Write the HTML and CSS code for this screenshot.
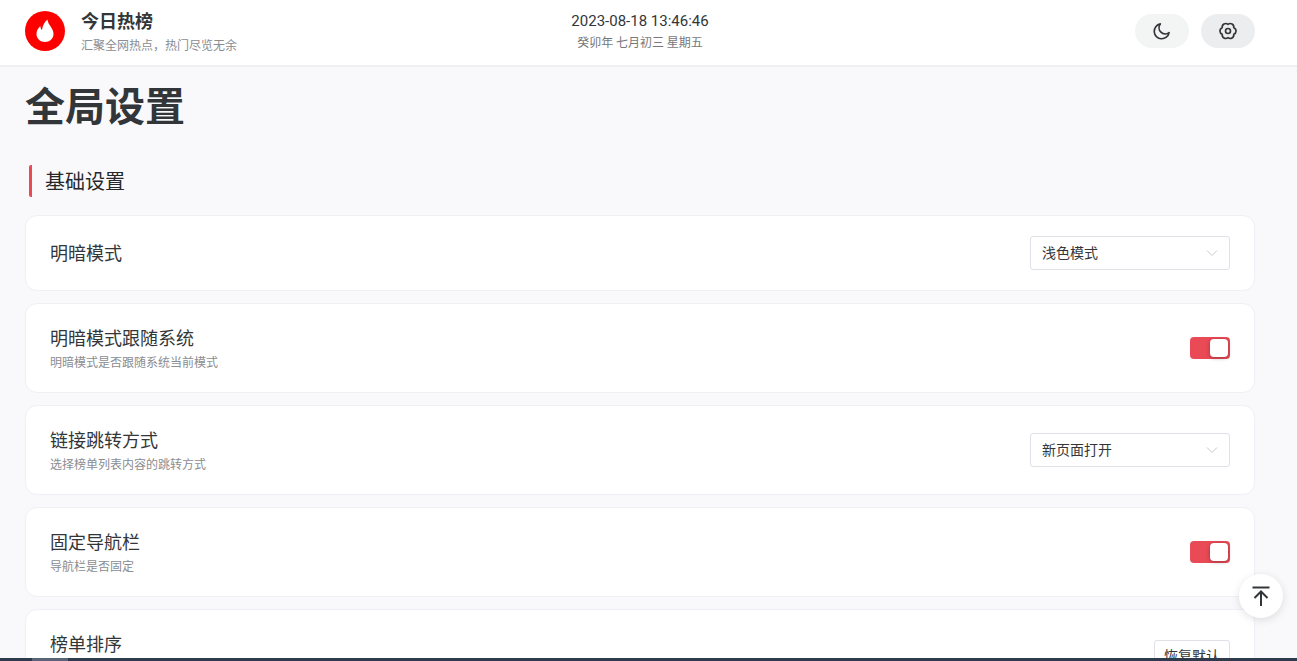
FILE: index.html
```html
<!DOCTYPE html>
<html lang="zh-CN">
<head>
    <meta charset="UTF-8">
    <title>全局设置 - 今日热榜</title>
    <link rel="stylesheet" href="styles.css">
</head>
<body>

<header class="nav">
    <div class="brand">
        <div class="logo">
            <svg width="24" height="24" viewBox="0 0 24 24"><path fill="#fff" d="M14.500 .5c.2 3 1.800 5 3.300 7.300C19.300 10 20.500 12.500 20.500 15c0 4.500-3.800 8-8.500 8s-8.500-3.500-8.500-8c0-3 1.300-5.500 3.800-8 .2 2 .6 3 1.700 4C9.500 7 11 3.500 14.500 .5z"/></svg>
        </div>
        <div class="brand-text">
            <div class="brand-name">今日热榜</div>
            <div class="brand-desc">汇聚全网热点，热门尽览无余</div>
        </div>
    </div>
    <div class="clock">
        <div class="clock-time">2023-08-18 13:46:46</div>
        <div class="clock-date">癸卯年 七月初三 星期五</div>
    </div>
    <div class="nav-btns">
        <div class="nav-btn">
            <svg width="20" height="20" viewBox="0 0 24 24" fill="none" stroke="#333639" stroke-width="2" stroke-linecap="round" stroke-linejoin="round"><path d="M10 3.500a9 9 0 1 0 10.500 10.500 7.500 7.500 0 0 1-10.500-10.500z"/></svg>
        </div>
        <div class="nav-btn active">
            <svg width="20" height="20" viewBox="0 0 24 24" fill="none" stroke="#333639" stroke-width="2" stroke-linejoin="round"><path d="M18.930 8A4.300 4.300 0 0 1 18.930 16A4.300 4.300 0 0 1 12 20A4.300 4.300 0 0 1 5.070 16A4.300 4.300 0 0 1 5.070 8A4.300 4.300 0 0 1 12 4A4.300 4.300 0 0 1 18.930 8z"/><circle cx="12" cy="12" r="3"/></svg>
        </div>
    </div>
</header>

<main class="content">
    <h1 class="page-title">全局设置</h1>
    <div class="section-title">基础设置</div>

    <div class="card card-single">
        <div class="card-name">明暗模式</div>
        <div class="select"><span>浅色模式</span><svg class="arrow" width="12" height="12" viewBox="0 0 12 12" fill="none" stroke="#c8c9cc" stroke-width="1"><path d="M1 3.500l5 5 5-5"/></svg></div>
    </div>

    <div class="card">
        <div>
            <div class="card-name">明暗模式跟随系统</div>
            <div class="card-tip">明暗模式是否跟随系统当前模式</div>
        </div>
        <div class="switch"><div class="knob"></div></div>
    </div>

    <div class="card">
        <div>
            <div class="card-name">链接跳转方式</div>
            <div class="card-tip">选择榜单列表内容的跳转方式</div>
        </div>
        <div class="select"><span>新页面打开</span><svg class="arrow" width="12" height="12" viewBox="0 0 12 12" fill="none" stroke="#c8c9cc" stroke-width="1"><path d="M1 3.500l5 5 5-5"/></svg></div>
    </div>

    <div class="card">
        <div>
            <div class="card-name">固定导航栏</div>
            <div class="card-tip">导航栏是否固定</div>
        </div>
        <div class="switch"><div class="knob"></div></div>
    </div>

    <div class="card">
        <div class="card-name card-name-only">榜单排序</div>
        <div class="reset-btn">恢复默认</div>
    </div>
</main>

<div class="scrollbar"><div class="scrollbar-thumb"></div></div>

<div class="to-top">
    <svg width="24" height="24" viewBox="0 0 24 24" fill="none" stroke="#333639" stroke-width="2"><path d="M3.500 3.500h17"/><path d="M12 22V8"/><path d="M5.500 14L12 7.500l6.500 6.500"/></svg>
</div>

</body>
</html>
```

FILE: styles.css
```css
html, body {
    margin: 0;
    height: 100%;
    overflow: hidden;
}
body {
    display: flex;
    flex-direction: column;
    background-color: #f9f9fc;
    color: #333639;
    font-family: "Noto Sans CJK SC", "Open Sans", sans-serif;
}

/* top bar */
.nav {
    box-sizing: border-box;
    flex: none;
    height: 67px;
    display: flex;
    align-items: center;
    justify-content: space-between;
    padding: 0 42px 4px 25px;
    background-color: #fff;
    border-bottom: 2px solid #efeff5;
}
.brand {
    width: 400px;
    display: flex;
    align-items: center;
}
.logo {
    width: 40px;
    height: 40px;
    border-radius: 50%;
    background-color: #f00;
    display: flex;
    align-items: center;
    justify-content: center;
}
.brand-text {
    margin-left: 16px;
}
.brand-name {
    font-size: 18px;
    font-weight: 700;
    line-height: 24px;
}
.brand-desc {
    margin-top: 4px;
    font-size: 12px;
    line-height: 17px;
    color: #8a8d91;
}
.clock {
    text-align: center;
}
.clock-time {
    font-family: Roboto, sans-serif;
    font-size: 15px;
    line-height: 20px;
}
.clock-date {
    margin-top: 2px;
    font-size: 12px;
    line-height: 17px;
    color: #76787b;
}
.nav-btns {
    width: 400px;
    display: flex;
    justify-content: flex-end;
    gap: 12px;
}
.nav-btn {
    width: 54px;
    height: 34px;
    border-radius: 17px;
    background-color: #f3f4f4;
    display: flex;
    align-items: center;
    justify-content: center;
}
.nav-btn.active {
    background-color: #ecedee;
}

/* settings */
.content {
    flex: 1;
    min-height: 0;
    overflow: hidden;
    padding: 0 42px 0 25px;
}
.page-title {
    margin: 9px 0 0;
    font-size: 40px;
    font-weight: 700;
    line-height: 56px;
}
.section-title {
    margin: 33px 0 18px 4px;
    height: 32px;
    padding-left: 13px;
    border-left: 3px solid #e94a55;
    border-radius: 2px;
    font-size: 20px;
    line-height: 32px;
    color: #26282b;
}
.card {
    box-sizing: border-box;
    height: 90px;
    margin-bottom: 12px;
    padding: 0 24px;
    display: flex;
    align-items: center;
    justify-content: space-between;
    background-color: #fff;
    border: 1px solid #efeff5;
    border-radius: 12px;
}
.card-single {
    height: 76px;
}
.card-name {
    margin-top: -2px;
    font-size: 18px;
    line-height: 25px;
}
.card-name-only {
    margin: 0 0 22px;
}
.card-tip {
    margin-top: 3px;
    font-size: 12px;
    line-height: 17px;
    color: #8a8d91;
}
.select {
    box-sizing: border-box;
    width: 200px;
    height: 34px;
    padding: 0 11px 2px;
    display: flex;
    align-items: center;
    justify-content: space-between;
    border: 1px solid #e0e0e6;
    border-radius: 3px;
    font-size: 14px;
}
.arrow {
    margin-top: 2px;
}
.switch {
    box-sizing: border-box;
    width: 40px;
    height: 22px;
    padding: 2px;
    display: flex;
    justify-content: flex-end;
    background-color: #e94a55;
    border-radius: 4px;
}
.knob {
    width: 18px;
    height: 18px;
    background-color: #fff;
    border-radius: 4px;
    box-shadow: 0 1px 4px rgba(0, 0, 0, 0.3);
}
.reset-btn {
    box-sizing: border-box;
    width: 76px;
    height: 34px;
    margin-top: 6px;
    border: 1px solid #e0e0e6;
    border-radius: 3px;
    font-size: 14px;
    line-height: 28px;
    text-align: center;
}

/* bottom bar, the horizontal scroller */
.scrollbar {
    flex: none;
    height: 3px;
    background-color: #2f3a4d;
}
.scrollbar-thumb {
    width: 36px;
    height: 3px;
    margin-left: 32px;
    background-color: #5a6476;
}

.to-top {
    position: fixed;
    right: 14px;
    bottom: 43px;
    width: 44px;
    height: 44px;
    border-radius: 50%;
    background-color: #fff;
    box-shadow: 0 2px 8px rgba(0, 0, 0, 0.12);
    display: flex;
    align-items: center;
    justify-content: center;
}
```
